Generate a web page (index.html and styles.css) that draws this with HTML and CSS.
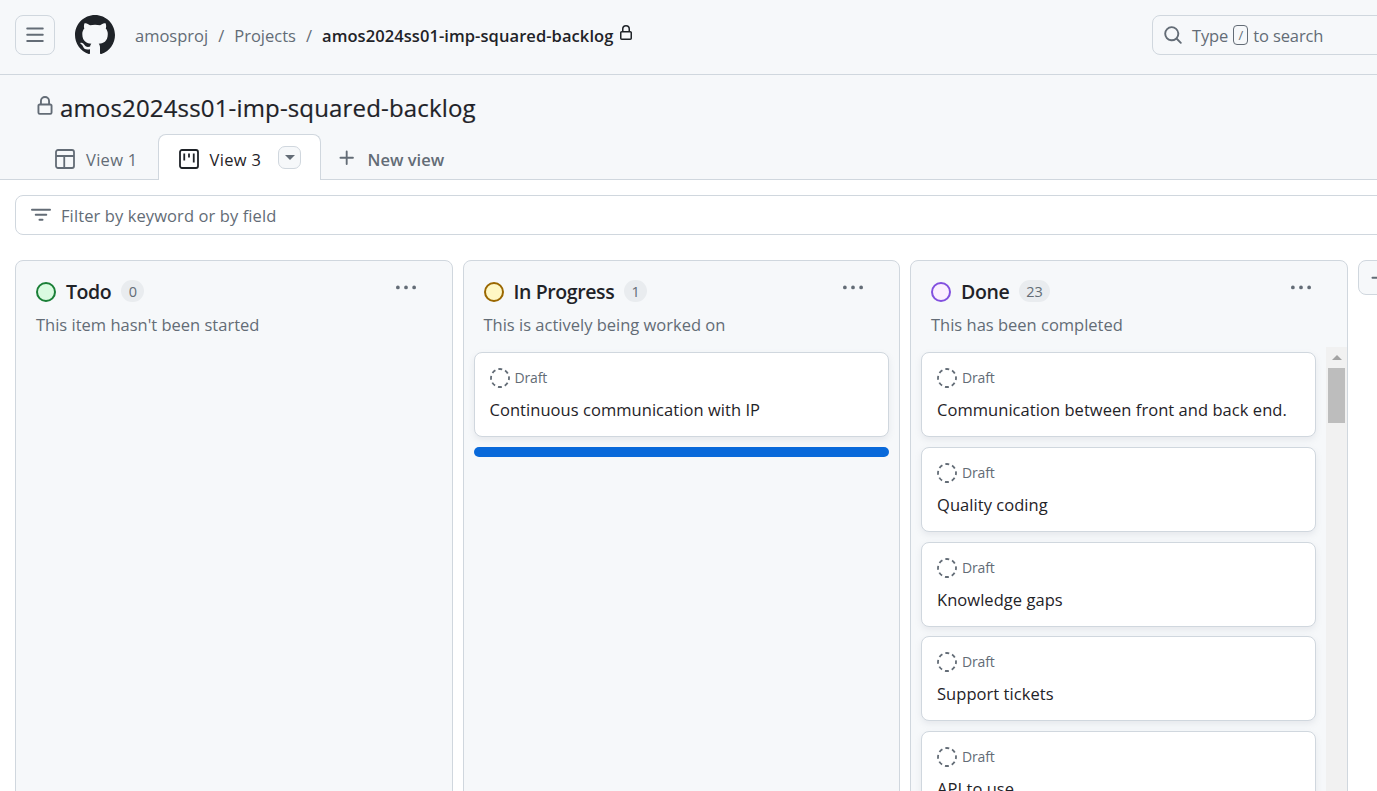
FILE: index.html
```html
<!DOCTYPE html>
<html lang="en">
<head>
<meta charset="utf-8">
<title>amos2024ss01-imp-squared-backlog</title>
<link rel="stylesheet" href="styles.css">
</head>
<body>
<svg class="defs" width="0" height="0" aria-hidden="true">
  <symbol id="i-lock" viewBox="0 0 16 16"><path d="M4 4a4 4 0 0 1 8 0v2h.25c.966 0 1.75.784 1.75 1.75v5.5A1.75 1.75 0 0 1 12.25 15h-8.5A1.75 1.75 0 0 1 2 13.25v-5.5C2 6.784 2.784 6 3.75 6H4Zm6.5 2V4a2.5 2.5 0 1 0-5 0v2ZM3.5 7.75v5.5c0 .138.112.25.25.25h8.5a.25.25 0 0 0 .25-.25v-5.5a.25.25 0 0 0-.25-.25h-8.5a.25.25 0 0 0-.25.25Z"/></symbol>
  <symbol id="i-draft" viewBox="0 0 20 20"><circle cx="10" cy="10" r="9" fill="none" stroke="currentColor" stroke-width="1.8" stroke-dasharray="4 3.07" stroke-dashoffset="2"/></symbol>
  <symbol id="i-dots" viewBox="0 0 16 16"><path d="M8 9a1.5 1.5 0 1 0 0-3 1.5 1.5 0 0 0 0 3ZM1.5 9a1.5 1.5 0 1 0 0-3 1.5 1.5 0 0 0 0 3Zm13 0a1.5 1.5 0 1 0 0-3 1.5 1.5 0 0 0 0 3Z"/></symbol>
</svg>

<header class="topbar">
  <button class="menu-btn" aria-label="Menu">
    <svg class="icon16" viewBox="0 0 16 16"><path d="M1 2.75A.75.75 0 0 1 1.75 2h12.5a.75.75 0 0 1 0 1.5H1.75A.75.75 0 0 1 1 2.75Zm0 5A.75.75 0 0 1 1.75 7h12.5a.75.75 0 0 1 0 1.5H1.75A.75.75 0 0 1 1 7.75ZM1.75 12h12.5a.75.75 0 0 1 0 1.5H1.75a.75.75 0 0 1 0-1.5Z"/></svg>
  </button>
  <svg class="logo" viewBox="0 0 16 16"><path d="M8 0c4.42 0 8 3.58 8 8a8.013 8.013 0 0 1-5.45 7.59c-.4.08-.55-.17-.55-.38 0-.27.01-1.13.01-2.2 0-.75-.25-1.23-.54-1.48 1.78-.2 3.65-.88 3.65-3.95 0-.88-.31-1.59-.82-2.15.08-.2.36-1.02-.08-2.12 0 0-.67-.22-2.2.82-.64-.18-1.32-.27-2-.27-.68 0-1.36.09-2 .27-1.53-1.03-2.2-.82-2.2-.82-.44 1.1-.16 1.92-.08 2.12-.51.56-.82 1.28-.82 2.15 0 3.06 1.86 3.75 3.64 3.95-.23.2-.44.55-.51 1.07-.46.21-1.61.55-2.33-.66-.15-.24-.6-.83-1.23-.82-.67.01-.27.38.01.53.34.19.73.9.82 1.13.16.45.68 1.31 2.69.94 0 .67.01 1.3.01 1.49 0 .21-.15.45-.55.38A7.995 7.995 0 0 1 0 8c0-4.42 3.58-8 8-8Z"/></svg>
  <nav class="crumbs">
    <span>amosproj</span><span class="sep">/</span><span>Projects</span><span class="sep">/</span><span class="crumb-current">amos2024ss01-imp-squared-backlog</span>
    <svg class="crumb-lock"><use href="#i-lock"/></svg>
  </nav>
  <div class="search">
    <svg class="icon16 search-icon" viewBox="0 0 16 16"><path d="M10.68 11.74a6 6 0 0 1-7.922-8.982 6 6 0 0 1 8.982 7.922l3.04 3.04a.749.749 0 0 1-.326 1.275.749.749 0 0 1-.734-.215ZM11.5 7a4.499 4.499 0 1 0-8.997 0A4.499 4.499 0 0 0 11.5 7Z"/></svg>
    <span>Type</span><kbd class="slash">/</kbd><span>to search</span>
  </div>
</header>

<section class="projhead">
  <h1 class="title"><svg class="title-lock"><use href="#i-lock"/></svg><span>amos2024ss01-imp-squared-backlog</span></h1>
  <div class="tabs">
    <a class="tab">
      <svg class="tab-icon" viewBox="0 0 20 20"><rect x="1" y="1" width="18" height="18" rx="2"/><path d="M1 7h18M9.25 7v12"/></svg>
      <span>View 1</span>
    </a>
    <a class="tab tab-active">
      <svg class="tab-icon" viewBox="0 0 20 20"><rect x="1" y="1" width="18" height="18" rx="2"/><path d="M5.25 4.5v7M10 4.5v4M14.75 4.5v9"/></svg>
      <span>View 3</span>
      <span class="tab-caret"><span class="caret"></span></span>
    </a>
    <a class="tab tab-new">
      <svg class="plus" viewBox="0 0 16 16"><path d="M7.75 2a.75.75 0 0 1 .75.75V7h4.25a.75.75 0 0 1 0 1.5H8.5v4.25a.75.75 0 0 1-1.5 0V8.5H2.75a.75.75 0 0 1 0-1.5H7V2.75A.75.75 0 0 1 7.75 2Z"/></svg>
      <span>New view</span>
    </a>
  </div>
</section>

<div class="filter">
  <svg class="filter-icon" viewBox="0 0 16 16"><path d="M.75 3h14.5a.75.75 0 0 1 0 1.5H.75a.75.75 0 0 1 0-1.5ZM3 7.75A.75.75 0 0 1 3.75 7h8.5a.75.75 0 0 1 0 1.5h-8.5A.75.75 0 0 1 3 7.75Zm3 4a.75.75 0 0 1 .75-.75h2.5a.75.75 0 0 1 0 1.5h-2.5a.75.75 0 0 1-.75-.75Z"/></svg>
  <span>Filter by keyword or by field</span>
</div>

<main class="board">
  <section class="col">
    <div class="col-head">
      <span class="status status-green"></span><h2 class="col-name">Todo</h2><span class="count">0</span>
      <svg class="dots"><use href="#i-dots"/></svg>
    </div>
    <p class="col-desc">This item hasn't been started</p>
  </section>

  <section class="col">
    <div class="col-head">
      <span class="status status-yellow"></span><h2 class="col-name">In Progress</h2><span class="count">1</span>
      <svg class="dots"><use href="#i-dots"/></svg>
    </div>
    <p class="col-desc">This is actively being worked on</p>
    <div class="cards">
      <article class="card">
        <div class="card-meta"><svg class="draft"><use href="#i-draft"/></svg><span>Draft</span></div>
        <div class="card-title">Continuous communication with IP</div>
      </article>
      <div class="dropbar"></div>
    </div>
  </section>

  <section class="col">
    <div class="col-head">
      <span class="status status-purple"></span><h2 class="col-name">Done</h2><span class="count">23</span>
      <svg class="dots"><use href="#i-dots"/></svg>
    </div>
    <p class="col-desc">This has been completed</p>
    <div class="scroll-wrap">
      <div class="cards cards-scroll">
        <article class="card">
          <div class="card-meta"><svg class="draft"><use href="#i-draft"/></svg><span>Draft</span></div>
          <div class="card-title">Communication between front and back end.</div>
        </article>
        <article class="card">
          <div class="card-meta"><svg class="draft"><use href="#i-draft"/></svg><span>Draft</span></div>
          <div class="card-title">Quality coding</div>
        </article>
        <article class="card">
          <div class="card-meta"><svg class="draft"><use href="#i-draft"/></svg><span>Draft</span></div>
          <div class="card-title">Knowledge gaps</div>
        </article>
        <article class="card">
          <div class="card-meta"><svg class="draft"><use href="#i-draft"/></svg><span>Draft</span></div>
          <div class="card-title">Support tickets</div>
        </article>
        <article class="card">
          <div class="card-meta"><svg class="draft"><use href="#i-draft"/></svg><span>Draft</span></div>
          <div class="card-title">API to use</div>
        </article>
      </div>
      <div class="scrollbar">
        <span class="scroll-up"></span>
        <span class="scroll-thumb"></span>
      </div>
    </div>
  </section>

  <button class="add-col" aria-label="Add column">
    <svg class="icon16" viewBox="0 0 16 16"><path d="M7.75 2a.75.75 0 0 1 .75.75V7h4.25a.75.75 0 0 1 0 1.5H8.5v4.25a.75.75 0 0 1-1.5 0V8.5H2.75a.75.75 0 0 1 0-1.5H7V2.75A.75.75 0 0 1 7.75 2Z"/></svg>
  </button>
</main>
</body>
</html>
```

FILE: styles.css
```css
* { box-sizing: border-box; }

html, body {
  margin: 0;
  height: 791px;
  overflow: hidden;
}

body {
  background: #fff;
  color: #1f2328;
  font-family: "Open Sans", "Noto Sans", "Liberation Sans", sans-serif;
  font-size: 16px;
  width: 1377px;
}

.defs { position: absolute; }

.icon16 { width: 16px; height: 16px; fill: currentColor; display: block; }

/* top bar */
.topbar {
  height: 75px;
  display: flex;
  align-items: center;
  padding: 0 0 4px 15px;
  background: #f6f8fa;
  border-bottom: 1px solid #d0d7de;
}

.menu-btn {
  width: 40px;
  height: 40px;
  padding: 0;
  display: flex;
  align-items: center;
  justify-content: center;
  flex: none;
  background: #f6f8fa;
  border: 1px solid #d0d7de;
  border-radius: 8px;
  color: #636c76;
}

.menu-btn .icon16 { width: 20px; height: 20px; }

.logo { width: 40px; height: 40px; margin-left: 20px; fill: #1f2328; flex: none; }

.crumbs {
  display: flex;
  align-items: center;
  margin-left: 20px;
  font-size: 16.5px;
  color: #636c76;
  white-space: nowrap;
}

.sep { margin: 0 10px; }

.crumb-current { color: #1f2328; font-weight: 600; letter-spacing: 0.07px; }

.crumb-lock { width: 16px; height: 16px; margin: -4px 0 0 5px; fill: #1f2328; }

.search {
  margin-left: auto;
  margin-right: -80px;
  flex: 0 0 305px;
  height: 40px;
  display: flex;
  align-items: center;
  gap: 5px;
  padding-left: 10px;
  background: #f6f8fa;
  border: 1px solid #d0d7de;
  border-radius: 8px;
  color: #636c76;
  font-size: 16.5px;
  letter-spacing: -0.12px;
  white-space: nowrap;
}

.search-icon { width: 20px; height: 20px; margin-right: 4px; }

.slash {
  display: flex;
  align-items: center;
  justify-content: center;
  width: 15px;
  height: 20px;
  border: 1px solid #636c76;
  border-radius: 4px;
  font-family: inherit;
  font-size: 13px;
}

/* project header */
.projhead {
  background: #f6f8fa;
  border-bottom: 1px solid #d0d7de;
  height: 105px;
  padding-left: 30px;
  display: flex;
  flex-direction: column;
}

.title {
  margin: 0;
  height: 60px;
  padding-top: 6px;
  display: flex;
  align-items: center;
  font-size: 24px;
  font-weight: 400;
  letter-spacing: 0.16px;
  color: #1f2328;
  white-space: nowrap;
  -webkit-text-stroke: 0.2px #1f2328;
}

.title-lock { width: 20px; height: 20px; margin: -4px 5px 0 5px; fill: #636c76; flex: none; }

.tabs {
  display: flex;
  align-items: stretch;
  height: 45px;
  flex: none;
}

.tab {
  display: flex;
  align-items: center;
  padding: 4px 20px 0 25px;
  margin-bottom: -1px;
  color: #636c76;
  font-size: 16.5px;
  letter-spacing: 0.3px;
  white-space: nowrap;
}

.tab-icon {
  width: 20px;
  height: 20px;
  margin-right: 11px;
  fill: none;
  stroke: currentColor;
  stroke-width: 1.8;
  flex: none;
}

.tab-active {
  width: 163px;
  padding: 3px 0 0 20px;
  color: #1f2328;
  background: #fff;
  border: 1px solid #d0d7de;
  border-bottom: 0;
  border-radius: 8px 8px 0 0;
}

.tab-caret {
  width: 23px;
  height: 23px;
  margin: -4px 0 0 17px;
  display: flex;
  align-items: center;
  justify-content: center;
  background: #f6f8fa;
  border: 1px solid #d0d7de;
  border-radius: 7px;
}

.caret {
  width: 0;
  height: 0;
  border: 5px solid transparent;
  border-top-color: #636c76;
  border-bottom-width: 0;
}

.tab-new { padding: 4px 0 0 16px; font-weight: 600; letter-spacing: 0; }

.plus { width: 20px; height: 20px; margin: -3px 11px 0 0; fill: currentColor; }

/* filter */
.filter {
  width: 1450px;
  height: 40px;
  margin: 15px 0 0 15px;
  display: flex;
  align-items: center;
  gap: 10px;
  padding-left: 15px;
  border: 1px solid #d0d7de;
  border-radius: 8px;
  color: #636c76;
  font-size: 16.5px;
  letter-spacing: 0.1px;
}

.filter-icon { width: 20px; height: 20px; fill: currentColor; flex: none; }

/* board */
.board {
  display: flex;
  align-items: flex-start;
  gap: 10px;
  width: 1500px;
  margin-top: 25px;
  padding-left: 15px;
}

.col {
  flex: 0 0 437.5px;
  height: 600px;
  background: #f6f8fa;
  border: 1px solid #d0d7de;
  border-radius: 8px;
  padding: 19px 0 0;
}

.col-head {
  display: flex;
  align-items: center;
  height: 24px;
  padding-left: 20px;
  position: relative;
}

.status {
  width: 20px;
  height: 20px;
  border-radius: 50%;
  border: 2px solid;
  flex: none;
}

.status-green { background: #dafbe1; border-color: #1a7f37; }
.status-yellow { background: #fff8c5; border-color: #9a6700; }
.status-purple { background: #fbefff; border-color: #8250df; }

.col-name {
  margin: -2px 0 0 10px;
  font-size: 19.5px;
  font-weight: 600;
  letter-spacing: -0.4px;
  color: #1f2328;
}

.count {
  margin: -2px 0 0 10px;
  min-width: 23px;
  height: 22px;
  padding: 0 7px;
  display: flex;
  align-items: center;
  justify-content: center;
  border-radius: 11px;
  background: #e9ecef;
  color: #636c76;
  font-size: 14.5px;
  font-weight: 500;
}

.dots {
  width: 20px;
  height: 20px;
  fill: #636c76;
  position: absolute;
  right: 36px;
  top: -2px;
}

.col-desc {
  margin: 9px 0 0;
  padding-left: 20px;
  height: 24px;
  line-height: 24px;
  font-size: 16.5px;
  color: #636c76;
}

.cards {
  margin-top: 15px;
  padding: 0 10px;
  display: flex;
  flex-direction: column;
  gap: 10px;
}

.card {
  height: 85px;
  flex: none;
  background: #fff;
  border: 1px solid #d0d7de;
  border-radius: 8px;
  box-shadow: 0 3px 6px rgba(140, 149, 159, 0.15);
  padding: 15px;
}

.card-meta {
  display: flex;
  align-items: center;
  gap: 5px;
  height: 20px;
  font-size: 14px;
  letter-spacing: -0.15px;
  color: #636c76;
}

.card-meta span { margin-top: -1px; }

.draft { width: 20px; height: 20px; color: #636c76; flex: none; }

.card-title {
  margin-top: 10px;
  font-size: 16.5px;
  line-height: 24px;
  letter-spacing: 0.05px;
  color: #1f2328;
  white-space: nowrap;
}

.dropbar {
  height: 10px;
  border-radius: 5px;
  background: #0969da;
}

.scroll-wrap {
  margin-top: 10px;
  display: flex;
  align-items: stretch;
  height: 500px;
}

.cards-scroll { margin-top: 5px; flex: 1; min-width: 0; gap: 9.75px; }

.scrollbar {
  width: 21px;
  flex: none;
  background: #f1f1f1;
  position: relative;
}

.scroll-up {
  position: absolute;
  left: 6px;
  top: 8px;
  border: 5px solid transparent;
  border-bottom-color: #a3a3a3;
  border-top-width: 0;
}

.scroll-thumb {
  position: absolute;
  left: 2.5px;
  right: 1.5px;
  top: 21px;
  height: 55px;
  background: #bdbdbd;
}

.add-col {
  flex: none;
  width: 60px;
  height: 35px;
  padding: 0 0 0 10px;
  background: #f6f8fa;
  border: 1px solid #d0d7de;
  border-radius: 8px;
  color: #636c76;
  display: flex;
  align-items: center;
}

.add-col .icon16 { width: 20px; height: 20px; }
```
